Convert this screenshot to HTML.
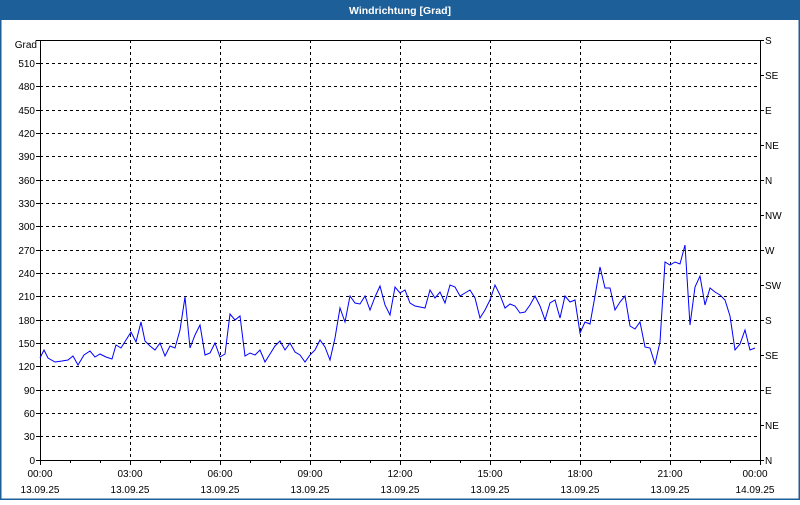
<!DOCTYPE html><html><head><style>
body{margin:0;width:800px;height:500px;overflow:hidden;background:#fff;font-family:"Liberation Sans",sans-serif}
</style></head><body>
<svg width="800" height="500" xmlns="http://www.w3.org/2000/svg" font-family="Liberation Sans, sans-serif" font-size="10">
<rect x="0" y="0" width="800" height="20" fill="#1d5f98"/>
<rect x="0" y="20" width="1.5" height="480" fill="#1d5f98"/>
<rect x="798.5" y="20" width="1.5" height="480" fill="#1d5f98"/>
<rect x="0" y="498.5" width="800" height="1.5" fill="#1d5f98"/>
<text x="400" y="14" fill="#fff" font-weight="bold" text-anchor="middle" font-size="10.5">Windrichtung [Grad]</text>
<g stroke="#000" stroke-dasharray="3,3" stroke-width="1">
<path d="M40 63.5H760M40 86.5H760M40 110.5H760M40 133.5H760M40 156.5H760M40 180.5H760M40 203.5H760M40 226.5H760M40 250.5H760M40 273.5H760M40 296.5H760M40 320.5H760M40 343.5H760M40 366.5H760M40 390.5H760M40 413.5H760M40 436.5H760"/>
<path d="M130.5 40V460M220.5 40V460M310.5 40V460M400.5 40V460M490.5 40V460M580.5 40V460M670.5 40V460"/>
</g>
<rect x="40.5" y="40.5" width="720" height="420" fill="none" stroke="#000"/>
<g stroke="#000">
<path d="M36 40.5h4M36 63.5h4M36 86.5h4M36 110.5h4M36 133.5h4M36 156.5h4M36 180.5h4M36 203.5h4M36 226.5h4M36 250.5h4M36 273.5h4M36 296.5h4M36 320.5h4M36 343.5h4M36 366.5h4M36 390.5h4M36 413.5h4M36 436.5h4M36 460.5h4"/>
<path d="M760 40.5h4M760 75.5h4M760 110.5h4M760 145.5h4M760 180.5h4M760 215.5h4M760 250.5h4M760 285.5h4M760 320.5h4M760 355.5h4M760 390.5h4M760 425.5h4M760 460.5h4"/>
<path d="M40.5 460v5M70.5 460v3M100.5 460v3M130.5 460v5M160.5 460v3M190.5 460v3M220.5 460v5M250.5 460v3M280.5 460v3M310.5 460v5M340.5 460v3M370.5 460v3M400.5 460v5M430.5 460v3M460.5 460v3M490.5 460v5M520.5 460v3M550.5 460v3M580.5 460v5M610.5 460v3M640.5 460v3M670.5 460v5M700.5 460v3M730.5 460v3M760.5 460v5"/>
</g>
<g text-anchor="end">
<text x="37" y="48">Grad</text>
<text x="35" y="67">510</text><text x="35" y="90">480</text><text x="35" y="114">450</text><text x="35" y="137">420</text><text x="35" y="160">390</text><text x="35" y="184">360</text><text x="35" y="207">330</text><text x="35" y="230">300</text><text x="35" y="254">270</text><text x="35" y="277">240</text><text x="35" y="300">210</text><text x="35" y="324">180</text><text x="35" y="347">150</text><text x="35" y="370">120</text><text x="35" y="394">90</text><text x="35" y="417">60</text><text x="35" y="440">30</text><text x="35" y="464">0</text>
</g>
<g>
<text x="765" y="44">S</text><text x="765" y="79">SE</text><text x="765" y="114">E</text><text x="765" y="149">NE</text><text x="765" y="184">N</text><text x="765" y="219">NW</text><text x="765" y="254">W</text><text x="765" y="289">SW</text><text x="765" y="324">S</text><text x="765" y="359">SE</text><text x="765" y="394">E</text><text x="765" y="429">NE</text><text x="765" y="464">N</text>
</g>
<g text-anchor="middle">
<text x="40" y="477">00:00</text><text x="130" y="477">03:00</text><text x="220" y="477">06:00</text><text x="310" y="477">09:00</text><text x="400" y="477">12:00</text><text x="490" y="477">15:00</text><text x="580" y="477">18:00</text><text x="670" y="477">21:00</text><text x="755" y="477">00:00</text>
<text x="40" y="493">13.09.25</text><text x="130" y="493">13.09.25</text><text x="220" y="493">13.09.25</text><text x="310" y="493">13.09.25</text><text x="400" y="493">13.09.25</text><text x="490" y="493">13.09.25</text><text x="580" y="493">13.09.25</text><text x="670" y="493">13.09.25</text><text x="755" y="493">14.09.25</text>
</g>
<polyline fill="none" stroke="#0000ff" stroke-width="1" points="40,358 44,350 48,358 55,362 62,361 68,360 73,356 78,365 84,355 90,351 95,357 100,354 106,357 112,359 116,345 121,348 126,340 131,332 136,342 141,322 145,341 150,346 155,350 160,343 165,356 170,346 175,348 180,330 185,297 190,348 195,335 200,325 205,355 210,353 215,343 220,357 225,354 230,314 235,320 240,316 245,356 250,353 255,355 260,350 265,362 270,354 275,346 280,341 285,350 290,343 295,352 300,355 305,362 310,355 315,350 320,340 325,347 330,360 335,338 340,308 345,322 350,296 355,303 360,304 365,296 370,310 375,297 380,286 385,305 390,315 395,287 400,293 405,290 410,303 415,306 420,307 425,308 430,290 435,298 440,292 445,303 450,285 455,287 460,296 465,293 470,290 475,298 480,318 485,310 490,300 495,285 500,295 505,308 510,304 515,306 520,313 525,312 530,305 535,296 540,306 545,320 550,303 555,300 560,318 565,296 570,302 575,300 580,333 585,322 590,324 595,296 600,267 605,288 610,288 615,310 620,302 625,296 630,326 635,329 640,322 645,347 650,348 655,364 660,342 665,262 670,265 675,262 680,264 685,245 690,325 695,287 700,276 705,305 710,288 715,292 720,295 725,300 730,316 735,350 740,344 745,330 750,350 755,348"/>
</svg>
</body></html>
